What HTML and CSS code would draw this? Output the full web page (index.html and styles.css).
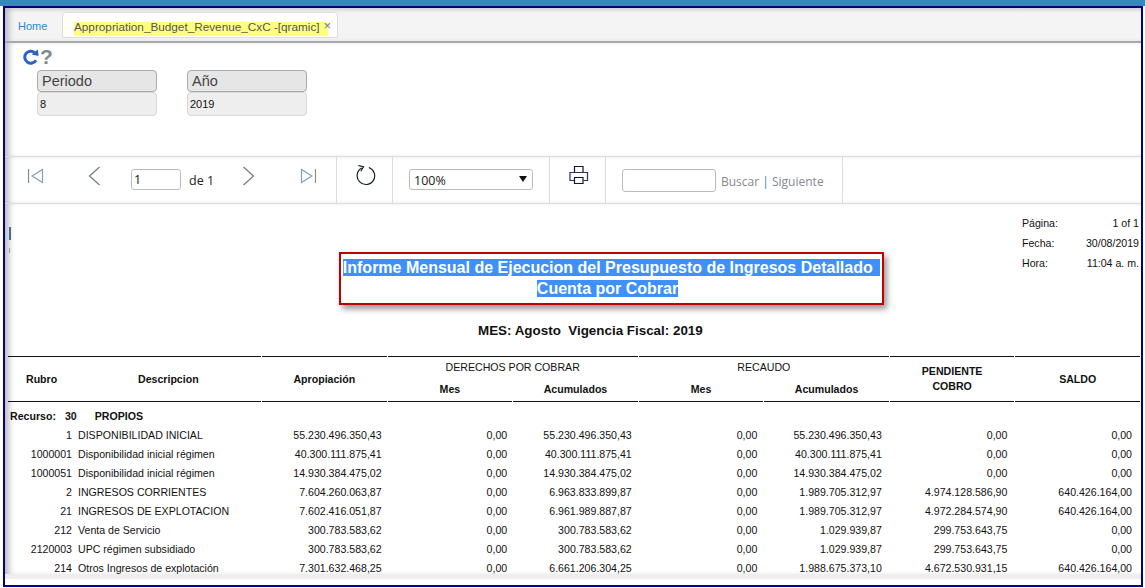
FILE: index.html
```html
<!DOCTYPE html>
<html lang="en">
<head>
  <meta charset="UTF-8" />
  <title>Appropriation_Budget_Revenue_CxC</title>
  <link rel="stylesheet" href="styles.css">
</head>
<body>
  <div class="topbar"></div>
  <div class="frame">
    <div class="tabs">
      <a class="tab-home">Home</a>
      <div class="tab-active">
        <span class="tab-title">Appropriation_Budget_Revenue_CxC -[qramic]<span class="tab-close">×</span></span>
      </div>
    </div>

    <div class="params">
      <div class="param-icons">
        <svg width="16" height="16" viewBox="0 0 16 16">
          <path d="M13 11.2A6 6 0 1 1 11.6 3.6" fill="none" stroke="#2b62c4" stroke-width="3"/>
          <path d="M8.6 5.6 15.6 7 14.8 0.4Z" fill="#2b62c4"/>
        </svg>
        <span class="help">?</span>
      </div>
      <div class="param-list">
        <div class="param">
          <div class="param-label">Periodo</div>
          <div class="param-value">8</div>
        </div>
        <div class="param">
          <div class="param-label">Año</div>
          <div class="param-value">2019</div>
        </div>
      </div>
    </div>

    <div class="toolbar">
      <div class="tool-group nav">
        <svg class="nav-first" width="17" height="16" viewBox="0 0 17 16">
          <path d="M1.5 1V15" stroke="#7d8c9c" stroke-width="1.2"/>
          <path d="M15.5 1.5 5 8 15.5 14.5Z" fill="none" stroke="#7d9cb8" stroke-width="1.1"/>
        </svg>
        <svg class="nav-prev" width="13" height="20" viewBox="0 0 13 20">
          <path d="M11.5 1 1.5 10 11.5 19" fill="none" stroke="#72808e" stroke-width="1.3"/>
        </svg>
        <input class="page-input" value="1">
        <span class="page-of">de 1</span>
        <svg class="nav-next" width="13" height="20" viewBox="0 0 13 20">
          <path d="M1.5 1 11.5 10 1.5 19" fill="none" stroke="#72808e" stroke-width="1.3"/>
        </svg>
        <svg class="nav-last" width="17" height="16" viewBox="0 0 17 16">
          <path d="M1.5 1.5 12 8 1.5 14.5Z" fill="none" stroke="#7d9cb8" stroke-width="1.1"/>
          <path d="M15.5 1V15" stroke="#a08a7a" stroke-width="1.2"/>
        </svg>
      </div>
      <div class="tool-group refresh">
        <svg width="21" height="21" viewBox="0 0 22 22">
          <path d="M7 3.2A9.2 9.2 0 1 0 14.5 2.6" fill="none" stroke="#101828" stroke-width="1.2"/>
          <path d="M3.5 0.5 9 2 6 6.5" fill="none" stroke="#101828" stroke-width="1.2"/>
        </svg>
      </div>
      <div class="tool-group zoom">
        <div class="zoom-select">100%<span class="zoom-arrow"></span></div>
      </div>
      <div class="tool-group print">
        <svg width="20" height="20" viewBox="0 0 20 20">
          <path d="M5.5 7V1.5H14V7" fill="none" stroke="#141432" stroke-width="1.2"/>
          <path d="M5 15.5H1V7.5H18.5V15.5H14.5" fill="none" stroke="#2a3350" stroke-width="1.2"/>
          <path d="M5.5 12.5H14V18.5H5.5Z" fill="#fff" stroke="#141432" stroke-width="1.2"/>
        </svg>
      </div>
      <div class="tool-group search">
        <input class="search-input">
        <span class="search-links">Buscar <span class="sep">|</span> Siguiente</span>
      </div>
    </div>

    <div class="report">
      <span class="stray-mark"></span>
      <div class="report-head">
        <div class="title-box">
          <div class="title-line"><span>Informe Mensual de Ejecucion del Presupuesto de Ingresos Detallado&nbsp;</span></div>
          <div class="title-line"><span>Cuenta por Cobrar</span></div>
        </div>
        <div class="page-info">
          <div class="info-row"><span>Página:</span><span>1 of 1</span></div>
          <div class="info-row"><span>Fecha:</span><span>30/08/2019</span></div>
          <div class="info-row"><span>Hora:</span><span>11:04 a. m.</span></div>
        </div>
      </div>
      <div class="subtitle">MES: Agosto&nbsp; Vigencia Fiscal: 2019</div>

      <table class="grid">
        <colgroup>
          <col class="c-rubro"><col class="c-desc"><col class="c-num"><col class="c-num"><col class="c-num"><col class="c-num"><col class="c-num"><col class="c-num"><col class="c-num">
        </colgroup>
        <thead>
          <tr class="head-top">
            <th colspan="2" rowspan="2" class="head-pair"><span class="h-rubro">Rubro</span><span class="h-desc">Descripcion</span></th>
            <th rowspan="2">Apropiación</th>
            <th colspan="2" class="group">DERECHOS POR COBRAR</th>
            <th colspan="2" class="group">RECAUDO</th>
            <th rowspan="2">PENDIENTE<br>COBRO</th>
            <th rowspan="2">SALDO</th>
          </tr>
          <tr class="head-sub">
            <th>Mes</th><th>Acumulados</th><th>Mes</th><th>Acumulados</th>
          </tr>
        </thead>
        <tbody>
          <tr class="resource"><td colspan="9"><b>Recurso:</b><b class="res-code">30</b><b class="res-name">PROPIOS</b></td></tr>
          <tr><td>1</td><td>DISPONIBILIDAD INICIAL</td><td>55.230.496.350,43</td><td>0,00</td><td>55.230.496.350,43</td><td>0,00</td><td>55.230.496.350,43</td><td>0,00</td><td>0,00</td></tr>
          <tr><td>1000001</td><td>Disponibilidad inicial régimen</td><td>40.300.111.875,41</td><td>0,00</td><td>40.300.111.875,41</td><td>0,00</td><td>40.300.111.875,41</td><td>0,00</td><td>0,00</td></tr>
          <tr><td>1000051</td><td>Disponibilidad inicial régimen</td><td>14.930.384.475,02</td><td>0,00</td><td>14.930.384.475,02</td><td>0,00</td><td>14.930.384.475,02</td><td>0,00</td><td>0,00</td></tr>
          <tr><td>2</td><td>INGRESOS CORRIENTES</td><td>7.604.260.063,87</td><td>0,00</td><td>6.963.833.899,87</td><td>0,00</td><td>1.989.705.312,97</td><td>4.974.128.586,90</td><td>640.426.164,00</td></tr>
          <tr><td>21</td><td>INGRESOS DE EXPLOTACION</td><td>7.602.416.051,87</td><td>0,00</td><td>6.961.989.887,87</td><td>0,00</td><td>1.989.705.312,97</td><td>4.972.284.574,90</td><td>640.426.164,00</td></tr>
          <tr><td>212</td><td>Venta de Servicio</td><td>300.783.583,62</td><td>0,00</td><td>300.783.583,62</td><td>0,00</td><td>1.029.939,87</td><td>299.753.643,75</td><td>0,00</td></tr>
          <tr><td>2120003</td><td>UPC régimen subsidiado</td><td>300.783.583,62</td><td>0,00</td><td>300.783.583,62</td><td>0,00</td><td>1.029.939,87</td><td>299.753.643,75</td><td>0,00</td></tr>
          <tr><td>214</td><td>Otros Ingresos de explotación</td><td>7.301.632.468,25</td><td>0,00</td><td>6.661.206.304,25</td><td>0,00</td><td>1.988.675.373,10</td><td>4.672.530.931,15</td><td>640.426.164,00</td></tr>
        </tbody>
      </table>
    </div>
    <div class="scroll-track"></div>
  </div>
</body>
</html>
```

FILE: styles.css
```css
html, body {
  margin: 0;
  height: 588px;
  overflow: hidden;
}

body {
  font-family: "Liberation Sans", Arial, sans-serif;
  background-color: white;
  color: #111;
}

.topbar {
  height: 6px;
  background-color: #3a87b9;
}

.frame {
  box-sizing: border-box;
  height: 581px;
  margin: 0 2px 0 3px;
  border: 2px solid #00008b;
  display: flex;
  flex-direction: column;
  overflow: hidden;
}

/* tabs */
.tabs {
  height: 35px;
  flex: none;
  padding: 4px 0 0 0;
  box-sizing: border-box;
  background: linear-gradient(#d8d8d8, #f4f4f4 5px);
  box-shadow: inset 7px 0 6px -3px #bbb;
  border-bottom: 2px solid #a9a9a9;
  display: flex;
  align-items: flex-start;
}

.tab-home {
  width: 57px;
  box-sizing: border-box;
  padding: 8px 0 0 13px;
  font-size: 11px;
  color: #2a87cf;
}

.tab-active {
  width: 276px;
  height: 26px;
  box-sizing: border-box;
  padding: 9px 0 0 11px;
  background: white;
  border: 1px solid #ddd;
  border-radius: 4px 4px 0 0;
}

.tab-title {
  display: block;
  width: 254px;
  height: 14px;
  line-height: 10px;
  background: #ffff80;
  font-size: 11.75px;
  color: #555;
  white-space: nowrap;
}

.tab-close {
  margin-left: 4px;
  font-size: 13px;
  line-height: 0;
  vertical-align: 1px;
  color: #6a7a90;
}

/* parameters */
.params {
  height: 113px;
  flex: none;
  box-sizing: border-box;
  padding: 5px 0 0 18px;
  background: white;
  box-shadow: inset 7px 0 6px -3px #bbb;
}

.param-icons {
  height: 18px;
  display: flex;
  align-items: center;
  gap: 1px;
}

.help {
  font-size: 21px;
  font-weight: bold;
  line-height: 18px;
  color: #85888c;
}

.param-list {
  display: flex;
  gap: 30px;
  margin: 4px 0 0 14px;
}

.param {
  width: 120px;
}

.param-label {
  box-sizing: border-box;
  height: 22px;
  line-height: 21px;
  padding-left: 4px;
  font-size: 14.5px;
  color: #444;
  background: #e6e6e6;
  border: 1px solid #aaa;
  border-radius: 4px;
}

.param-value {
  box-sizing: border-box;
  height: 24px;
  line-height: 22px;
  padding-left: 2px;
  font-size: 11px;
  background: #eee;
  border: 1px solid #d8d8d8;
  border-radius: 4px;
}

/* report toolbar */
.toolbar {
  height: 48px;
  flex: none;
  box-sizing: border-box;
  display: flex;
  border-top: 1px solid #ddd;
  border-bottom: 1px solid #ddd;
  box-shadow: inset 7px 0 6px -3px #bbb;
}

.tool-group {
  box-sizing: border-box;
  height: 46px;
  border-right: 1px solid #ddd;
  display: flex;
  align-items: center;
}

.nav {
  width: 332px;
  padding: 0 0 9px 22px;
}

.nav-prev {
  margin-left: 44px;
}

.page-input {
  box-sizing: border-box;
  width: 50px;
  height: 21px;
  margin: 8px 0 0 30px;
  padding: 0 0 0 2px;
  border: 1px solid #bbb;
  border-radius: 3px;
  font: 12.5px "Open Sans", sans-serif;
  color: #111;
}

.page-of {
  margin: 9px 0 0 8px;
  font-family: "Open Sans", sans-serif;
  font-size: 12.5px;
  color: #222;
}

.nav-next {
  margin-left: 28px;
}

.nav-last {
  margin-left: 45px;
}

.refresh {
  width: 56px;
  padding: 0 0 10px 18px;
}

.zoom {
  width: 157px;
  padding: 0 0 1px 16px;
}

.zoom-select {
  box-sizing: border-box;
  position: relative;
  width: 124px;
  height: 21px;
  line-height: 21px;
  padding-left: 4px;
  border: 1px solid #bbb;
  border-radius: 3px;
  font-family: "Open Sans", sans-serif;
  font-size: 12.5px;
  color: #222;
}

.zoom-arrow {
  position: absolute;
  right: 5px;
  top: 6px;
  border-left: 4px solid transparent;
  border-right: 4px solid transparent;
  border-top: 6px solid #111;
}

.print {
  width: 56px;
  padding: 0 0 10px 19px;
}

.search {
  width: 237px;
  padding-left: 16px;
}

.search-input {
  box-sizing: border-box;
  width: 94px;
  height: 23px;
  border: 1px solid #bbb;
  border-radius: 3px;
}

.search-links {
  margin: 3px 0 0 5px;
  font-family: "Open Sans", sans-serif;
  font-size: 12px;
  color: #84898f;
  white-space: nowrap;
}

.sep {
  color: #3b82c0;
}

/* report body */
.report {
  position: relative;
  flex: 1;
  min-height: 0;
  overflow: hidden;
  padding: 0 0 0 3px;
  background: white;
  box-shadow: inset 7px 0 6px -3px #bbb;
}

.stray-mark {
  position: absolute;
  left: 4px;
  top: 23px;
  width: 2px;
  height: 13px;
  background: #4a6a8c;
}

.stray-mark::after {
  content: "";
  position: absolute;
  left: 0;
  top: 21px;
  width: 1px;
  height: 5px;
  background: #999;
}

.report-head {
  display: grid;
  grid-template-columns: 331px 545px 1fr;
  height: 118px;
}

.title-box {
  grid-column: 2;
  box-sizing: border-box;
  height: 53px;
  margin-top: 48px;
  padding-top: 5px;
  border: 2px solid #c00000;
  box-shadow: 3px 4px 6px #999;
  text-align: center;
  font-size: 16px;
  font-weight: bold;
  color: white;
}

.title-line {
  height: 21px;
  line-height: 18px;
}

.title-line:first-child span {
  padding-right: 3px;
}

.title-line:last-child {
  padding-right: 8px;
}

.title-line span {
  background: #3e90fb;
  white-space: nowrap;
}

.page-info {
  grid-column: 3;
  padding: 9px 2px 0 138px;
  font-size: 10.6px;
}

.info-row {
  display: flex;
  justify-content: space-between;
  height: 20px;
  line-height: 20px;
}

.subtitle {
  height: 34px;
  padding-left: 470px;
  font-size: 13.4px;
  font-weight: bold;
  line-height: 17px;
}

.grid {
  table-layout: fixed;
  width: 1134px;
  border-collapse: separate;
  border-spacing: 1px 0;
  margin-left: -1px;
  font-size: 10.6px;
}

.c-rubro { width: 64px; }
.c-desc { width: 188px; }
.c-num { width: 124.5px; }

.grid th {
  padding: 0;
  font-weight: bold;
  line-height: 15px;
}

.head-top th {
  border-top: 1px solid #111;
  border-bottom: 1px solid #111;
  height: 21px;
}

.head-top th.group {
  border-bottom: none;
  font-weight: normal;
}

.head-sub th {
  height: 23px;
  border-bottom: 1px solid #111;
}

.head-pair {
  text-align: left;
}

.h-rubro {
  display: inline-block;
  width: 60px;
  padding-left: 18px;
  box-sizing: border-box;
}

.h-desc {
  display: inline-block;
  width: 61px;
  margin-left: 70px;
  white-space: nowrap;
}

.grid td {
  height: 19px;
  padding: 0 6px 0 0;
  text-align: right;
  white-space: nowrap;
  overflow: hidden;
}

.grid td:first-child {
  padding-right: 0;
}

.grid td:nth-child(2) {
  text-align: left;
  padding: 0 0 0 5px;
}

.grid td:nth-child(3),
.grid td:nth-child(4) {
  padding-right: 5px;
}

.grid td:nth-child(7),
.grid td:nth-child(8) {
  padding-right: 7px;
}

.grid td:nth-child(9) {
  padding-right: 8px;
}

.grid .resource td {
  height: 23px;
  padding: 4px 0 0 2px;
  text-align: left;
  box-sizing: border-box;
}

.res-code {
  margin-left: 9px;
}

.res-name {
  margin-left: 18px;
}

.scroll-track {
  height: 5px;
  margin-bottom: 6px;
  flex: none;
  background: #eee;
}
```
